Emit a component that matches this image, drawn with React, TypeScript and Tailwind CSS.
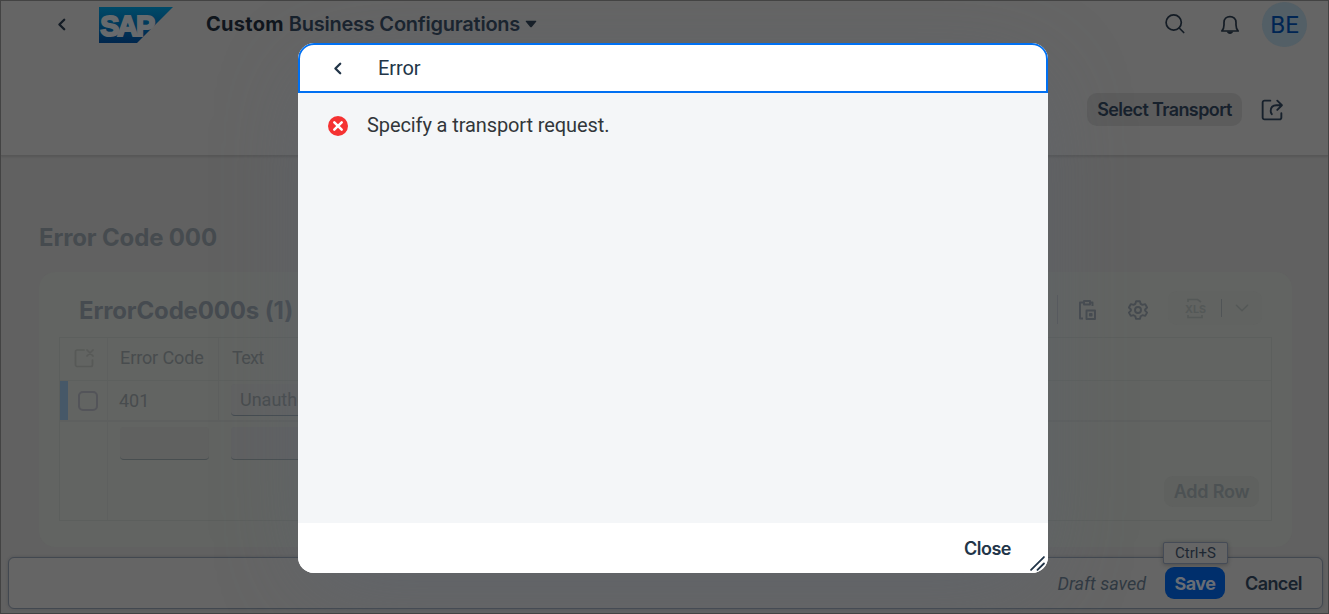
import type { ReactNode } from "react";

function Icon({ size = 20, className = "", children }: { size?: number; className?: string; children: ReactNode }) {
  return (
    <svg width={size} height={size} viewBox="0 0 20 20" fill="none" stroke="currentColor" strokeWidth="1.7" strokeLinecap="round" strokeLinejoin="round" className={`shrink-0 ${className}`}>
      {children}
    </svg>
  );
}

function BackIcon() {
  return (
    <Icon>
      <path d="M12.2 5.700 7.400 10.500l4.800 4.800" strokeWidth="2.3" />
    </Icon>
  );
}

function SapLogo() {
  return (
    <svg width="74" height="36" viewBox="0 0 74 36" className="ml-[27px] mt-[2px] shrink-0">
      <defs>
        <linearGradient id="sap" x1="0" y1="0" x2="0" y2="1">
          <stop offset="0" stopColor="#004a68" />
          <stop offset="1" stopColor="#00264d" />
        </linearGradient>
      </defs>
      <path d="M0 0h74L38 36H0z" fill="url(#sap)" />
      <text x="1.2" y="28.700" textLength="53" lengthAdjust="spacingAndGlyphs" fill="#676a6d" stroke="#676a6d" strokeWidth="2" fontFamily="Liberation Sans" fontWeight="700" fontSize="29" letterSpacing="-2">SAP</text>
    </svg>
  );
}

function ShellHeader() {
  return (
    <header className="flex h-[155px] shrink-0 flex-col border-b border-[#575757] bg-[#656565] shadow-[0_1px_2px_rgba(0,0,0,0.12)]">
      <div className="flex h-[46px] items-center pl-[51px] pr-[21px] text-[#141c25]">
        <BackIcon />
        <SapLogo />
        <h1 className="ml-[33px] w-[314px] whitespace-nowrap text-[20px] font-semibold tracking-[-0.23px] text-[#17212c]">
          <span className="font-bold tracking-[0.3px] text-[#10161d]">Custom</span> Business Configurations
        </h1>
        <svg width="12" height="8" viewBox="0 0 12 8" className="ml-[5px]">
          <path d="M1.4.7h9.200q1.300 0 .5 1L7 6.800q-1 1-2 0L.9 1.700q-.8-1 .5-1z" fill="#141c25" />
        </svg>
        <div className="grow" />
        <Icon className="mr-[35px]">
          <circle cx="8.7" cy="8.500" r="7.600" />
          <path d="m14.200 14 4.500 4.500" />
        </Icon>
        <Icon className="mr-[22px] mt-[2px]">
          <path d="M1.800 16h16.400c-1.600-1.700-2.200-3.500-2.200-6V7.400C16 4 13.400 1.600 10 1.600S4 4 4 7.400V10c0 2.500-.6 4.300-2.200 6z" />
          <path d="M6.800 16.500h6.400c-.4 1.500-1.600 2.500-3.200 2.500s-2.800-1-3.200-2.500z" fill="currentColor" stroke="none" />
        </Icon>
        <div className="mt-px flex size-[45px] shrink-0 items-center justify-center rounded-full bg-[#535f66] text-[24px] text-[#002553]">
          <span className="font-[Roboto]">BE</span>
        </div>
      </div>
      <div className="mt-[46px] flex items-center justify-end pr-[45px] text-[#17212c]">
        <button className="h-[33px] w-[155px] whitespace-nowrap rounded-[10px] bg-[#5c5c5c] text-[18px] font-semibold tracking-[-0.6px]">Select Transport</button>
        <Icon size={22} className="ml-[19px]">
          <path d="M8.500 1.500H3.200A1.700 1.700 0 0 0 1.500 3.200v13.600a1.700 1.700 0 0 0 1.700 1.700h13.600a1.700 1.700 0 0 0 1.700-1.700V13M9.800 13.800q-1-1.300-1-2.800c0-3.500 1.700-5.300 5.200-5.300h4.500M14.800 1.500l4.200 4.200-4.200 4.200" />
        </Icon>
      </div>
    </header>
  );
}

function Toolbar() {
  return (
    <div className="flex h-[65px] items-center pl-5 pr-[10px] text-[#464b50]">
      <h3 className="mt-[12px] grow whitespace-nowrap text-[24px] font-bold tracking-[-0.15px]">ErrorCode000s (1)</h3>
      <div className="mr-5 mt-[10px] h-[29px] w-px bg-[#575a5c]" />
      <Icon className="mr-[30px] mt-[10px]">
        <path d="M6 2.500H2V18.500h3M6 1h6v3.500H6zM12 2.500h2.500V6M8.500 10.500h8.500V19H8.500zM11.900 13.900h1.700v1.700h-1.700z" strokeLinecap="butt" strokeWidth="1.900" />
      </Icon>
      <Icon className="mt-[10px]">
        <path d="M8.100 1.200h3.800l.8 2.700 1.700 1 2.800-.7 1.900 3.300-2 2v1.100l2 2-1.900 3.300-2.800-.7-1.700 1-.8 2.700H8.100l-.8-2.700-1.700-1-2.800.7-1.900-3.300 2-2V9.500l-2-2 1.900-3.300 2.800.7 1.700-1z" strokeWidth="1.900" />
        <circle cx="10" cy="10" r="3" strokeWidth="1.900" />
      </Icon>
      <div className="ml-[20px] mt-[7px] flex h-[34px] w-[94px] items-center rounded-[9px] bg-[#616361] pl-[17px] text-[#545857]">
        <svg width="21" height="21" viewBox="0 0 21 21" fill="none" stroke="currentColor" strokeWidth="1.600" className="shrink-0">
          <path d="M3 4V1.500h9.500L16 4M3 17v2.500h14V17" />
          <text x="0" y="14.500" textLength="21" lengthAdjust="spacingAndGlyphs" fill="currentColor" stroke="none" fontFamily="Inter" fontWeight="700" fontSize="11">XLS</text>
        </svg>
        <div className="ml-[15px] h-[18px] w-px bg-[#505456]" />
        <Icon size={16} className="ml-[12px]">
          <path d="m3 6.500 7 7 7-7" />
        </Icon>
      </div>
    </div>
  );
}

function Table() {
  return (
    <div className="flex h-[184px] flex-col border border-[#5c5f5d] font-[Roboto] text-[18px] text-[#484c4e]">
      <div className="flex h-[43px] shrink-0 border-b border-[#5d605e]">
        <div className="flex w-12 items-center border-r border-[#5e605f] pb-[3px] pl-[14px] text-[#575957]">
          <Icon>
            <path d="M10 2H3.200A1.700 1.700 0 0 0 1.500 3.700v13.100a1.700 1.700 0 0 0 1.700 1.700h13.600a1.700 1.700 0 0 0 1.700-1.700V12M13 2l6 6M19 2l-6 6" />
          </Icon>
        </div>
        <div className="flex w-[111px] items-center border-r border-[#5e605f] pb-[3px] pl-3 tracking-[-0.1px]">Error Code</div>
        <div className="flex items-center pb-[3px] pl-[13px] tracking-[-0.7px]">Text</div>
      </div>
      <div className="flex h-[41px] shrink-0 border-b-2 border-[#5e605f]">
        <div className="flex w-12 items-center border-r border-[#5e605f]">
          <div className="h-full w-2 bg-[#465868]" />
          <div className="ml-[10px] size-5 rounded-[5px] border-2 border-[#535459]" />
        </div>
        <div className="flex w-[111px] items-center border-r border-[#5e605f] pl-[11px]">401</div>
        <div className="ml-[12px] mt-[3px] flex h-[32px] w-[200px] items-center rounded-[4px] border-b border-[#444b50] bg-[#616262] pl-[9px]">Unauthorized</div>
      </div>
      <div className="flex grow">
        <div className="w-12 border-r border-[#5e605f]" />
        <div className="ml-[12px] mt-[5px] h-[33px] w-[89px] rounded-[4px] border-b border-[#484e50] bg-[#606160]" />
        <div className="ml-[22px] mt-[5px] h-[33px] w-[200px] rounded-[4px] border-b border-[#484e50] bg-[#606162]" />
        <div className="grow" />
        <button className="mr-[12px] mt-[54px] h-[31px] w-[95px] whitespace-nowrap rounded-[9px] bg-[#5f615f] font-[Inter] text-[18px] font-semibold tracking-[-0.2px] text-[#4c5153]">Add Row</button>
      </div>
    </div>
  );
}

function FooterBar() {
  return (
    <footer className="relative ml-[7px] mr-[5px] mb-[4px] flex h-[52px] shrink-0 items-center justify-end rounded-[6px] border border-[#424850] bg-[#656565] pr-5 text-[18px] shadow-[0_0_3px_rgba(30,40,55,0.25)]">
      <span className="font-[Roboto] italic text-[#303942]">Draft saved</span>
      <button className="ml-[19px] h-8 w-[60px] rounded-[9px] bg-[#002f6c] font-bold tracking-[-0.5px] text-[#686d75]">Save</button>
      <button className="ml-5 w-[57px] whitespace-nowrap font-semibold tracking-[-0.6px] text-[#17212c]">Cancel</button>
      <div className="absolute right-[94px] top-[-16px] flex h-[22px] w-[65px] items-center justify-center rounded-[2px] border border-[#454b56] bg-[#656565] font-[Roboto] text-[15px] text-[#1d2732] shadow-[0_1px_4px_rgba(0,0,0,0.25)]">Ctrl+S</div>
    </footer>
  );
}

function ErrorDialog() {
  return (
    <section role="dialog" className="absolute left-[297px] top-[42px] flex h-[530px] w-[750px] flex-col overflow-hidden rounded-[16px] bg-[#f4f6f8] font-[Roboto]">
      <header className="flex h-[50px] shrink-0 items-center rounded-t-[16px] border-2 border-[#0070f2] bg-white pl-[28px] text-[20px] text-[#223548]">
        <BackIcon />
        <h2 className="ml-[30px] tracking-[-0.1px]">Error</h2>
      </header>
      <div className="flex grow items-start px-[30px] pt-[17px] text-[20px] text-[#32363a]">
        <svg width="20" height="20" viewBox="0 0 20 20" className="mt-[6px]">
          <circle cx="10" cy="10" r="10" fill="#f53232" />
          <path d="m6.300 6.300 7.400 7.400M13.700 6.300l-7.400 7.400" stroke="white" strokeWidth="2.500" strokeLinecap="round" />
        </svg>
        <p className="ml-[19px] tracking-[-0.1px]">Specify a transport request.</p>
      </div>
      <footer className="relative flex h-[50px] shrink-0 items-center justify-end bg-white pr-[37px] font-[Inter] text-[18px] font-semibold tracking-[-0.500px] text-[#223548]">
        Close
        <svg width="15" height="15" viewBox="0 0 14 14" className="absolute bottom-[2px] right-[3px]" stroke="#223548" strokeWidth="1.700" strokeLinecap="round">
          <path d="M1 13 13 1M7 13l6-6" />
        </svg>
      </footer>
    </section>
  );
}

export default function App() {
  return (
    <div className="relative flex h-[614px] w-[1329px] flex-col overflow-hidden border border-[#434343] bg-[#616161] font-[Inter]">
      <ShellHeader />
      <main className="grow px-[38px] pt-[62px]">
        <h2 className="h-[54px] whitespace-nowrap pt-[2px] text-[24px] font-bold tracking-[-0.15px] text-[#464b4f]">Error Code 000</h2>
        <div className="h-[275px] w-[1253px] rounded-[16px] bg-[#626462] px-5">
          <Toolbar />
          <Table />
        </div>
      </main>
      <FooterBar />
      <div className="pointer-events-none absolute left-[327px] top-[72px] h-[472px] w-[692px] rounded-[16px] shadow-[0_20px_90px_20px_rgba(92,100,112,0.450)]" />
      <ErrorDialog />
    </div>
  );
}
